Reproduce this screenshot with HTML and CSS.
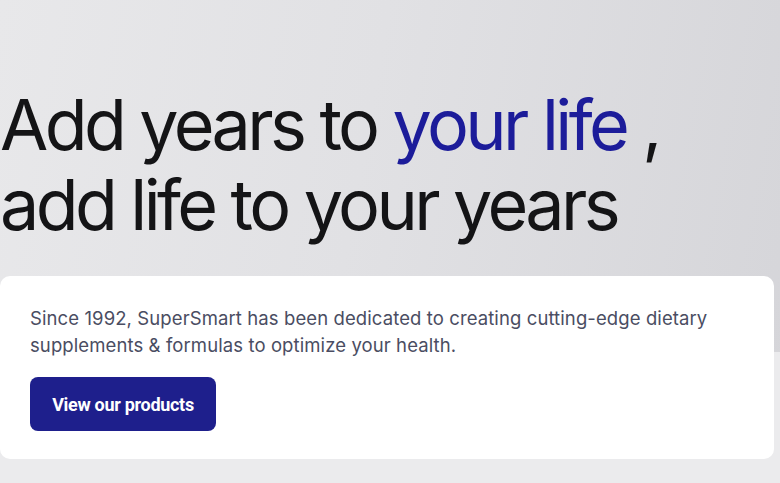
FILE: index.html
```html
<!DOCTYPE html>
<html lang="en">
<head>
<meta charset="utf-8">
<title>SuperSmart</title>
<link rel="stylesheet" href="styles.css">
</head>
<body>
<main class="hero">
  <h1 class="hero-title">Add years to <span class="accent">your life</span> ,<br>add life to your years</h1>
  <section class="card">
    <p class="card-text">Since 1992, SuperSmart has been dedicated to creating cutting-edge dietary supplements &amp; formulas to optimize your health.</p>
    <a class="btn" href="#">View our products</a>
  </section>
</main>
</body>
</html>
```
FILE: styles.css
```css
html, body {
  margin: 0;
  padding: 0;
}
body {
  width: 780px;
  height: 483px;
  overflow: hidden;
  font-family: Inter, "Liberation Sans", sans-serif;
  background:
    linear-gradient(to bottom, rgba(236,236,238,0) 352px, #ebebed 352px),
    linear-gradient(100deg, #e8e8ea 0%, #e1e1e4 45%, #d5d5d9 100%);
}
.hero {
  display: flex;
  flex-direction: column;
  padding-top: 85px;
}
.hero-title {
  margin: 0 0 31px 0;
  padding-left: 0;
  font-weight: 400;
  font-size: 70px;
  line-height: 80px;
  letter-spacing: -3.6px;
  color: #141416;
}
.accent {
  color: #1c1c9a;
}
.card {
  width: 774px;
  box-sizing: border-box;
  background: #ffffff;
  border-radius: 10px;
  padding: 29px 30px 28px 30px;
  display: flex;
  flex-direction: column;
  align-items: flex-start;
}
.card-text {
  margin: 0 0 18px 0;
  font-size: 18.5px;
  line-height: 27px;
  color: #4a4d62;
  letter-spacing: 0.1px;
}
.btn {
  display: flex;
  align-items: center;
  justify-content: center;
  width: 186px;
  height: 54px;
  box-sizing: border-box;
  background: #1e1f8c;
  border-radius: 8px;
  color: #ffffff;
  text-decoration: none;
  font-family: Roboto, "Liberation Sans", sans-serif;
  font-weight: 700;
  font-size: 18px;
  letter-spacing: -0.3px;
}
```
